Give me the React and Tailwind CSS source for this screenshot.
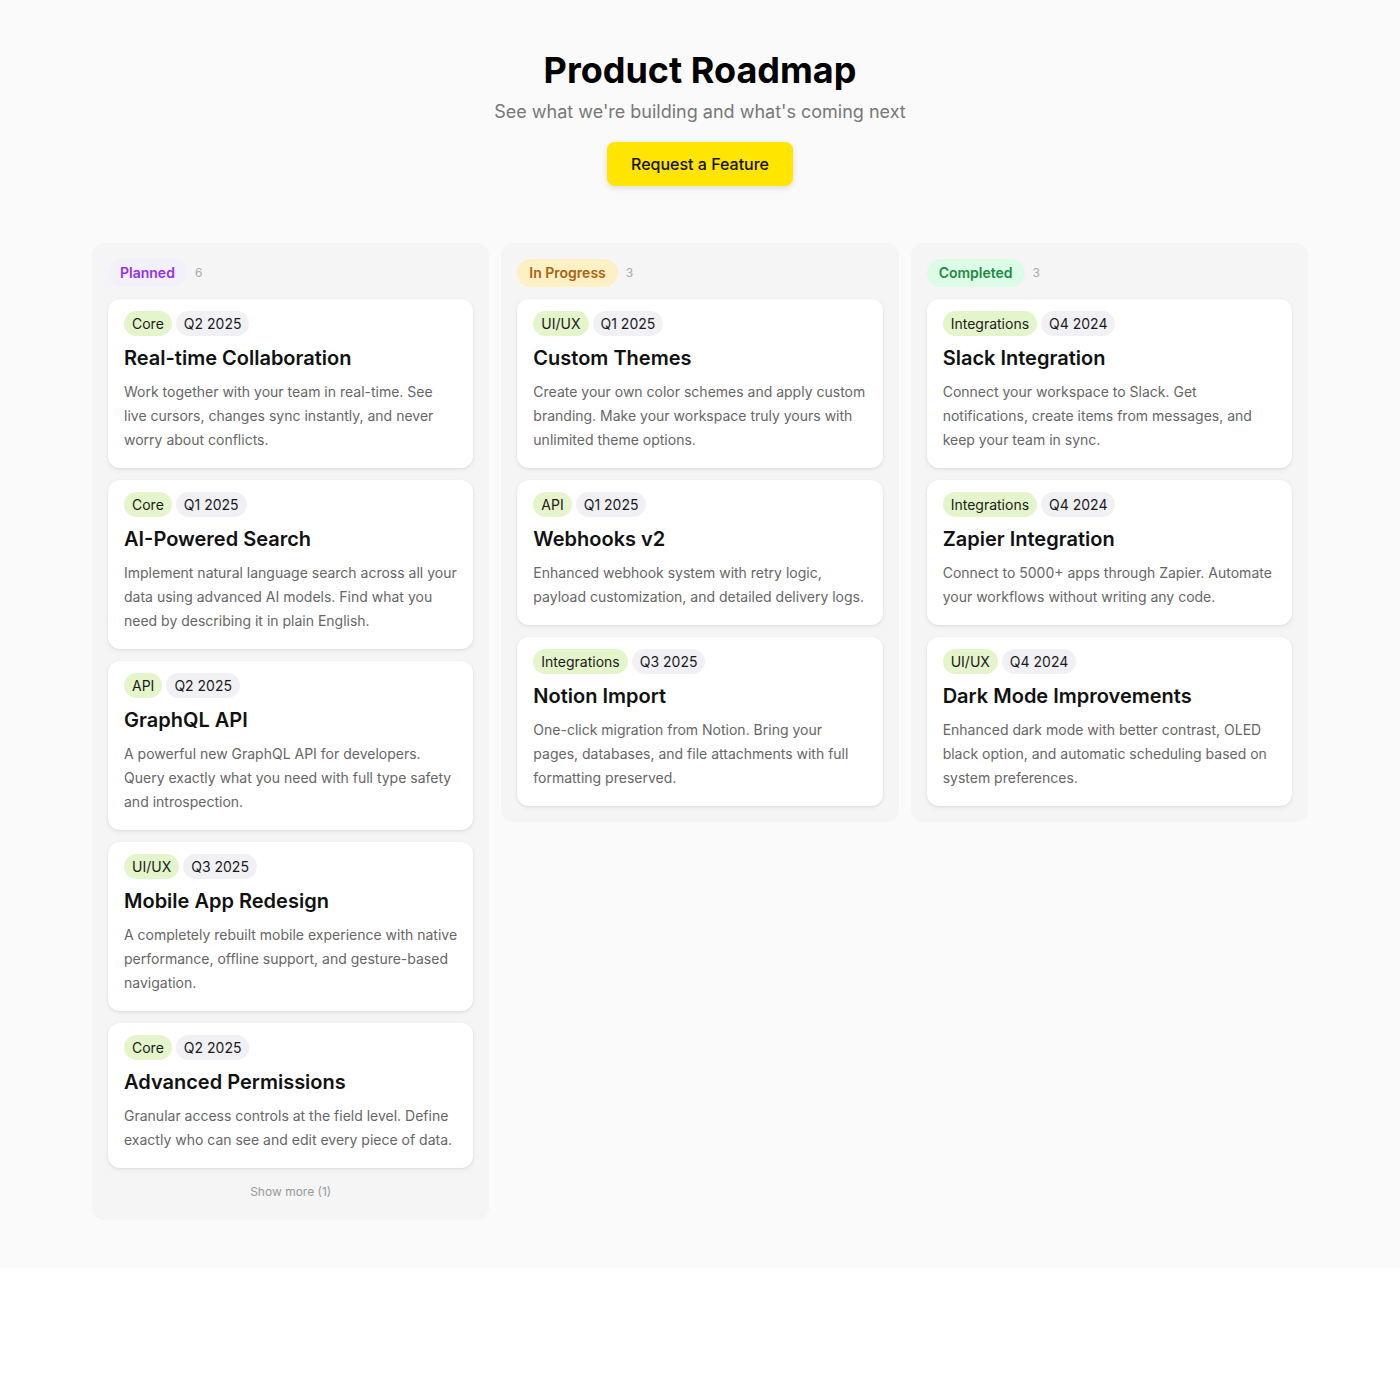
const columns = [
  {
    name: 'Planned',
    count: 6,
    pill: 'bg-[#f2f0f9] text-[#9333ea]',
    showMore: 1,
    items: [
      {
        tag: 'Core',
        quarter: 'Q2 2025',
        title: 'Real-time Collaboration',
        body: 'Work together with your team in real-time. See live cursors, changes sync instantly, and never worry about conflicts.',
      },
      {
        tag: 'Core',
        quarter: 'Q1 2025',
        title: 'AI-Powered Search',
        body: 'Implement natural language search across all your data using advanced AI models. Find what you need by describing it in plain English.',
      },
      {
        tag: 'API',
        quarter: 'Q2 2025',
        title: 'GraphQL API',
        body: 'A powerful new GraphQL API for developers. Query exactly what you need with full type safety and introspection.',
      },
      {
        tag: 'UI/UX',
        quarter: 'Q3 2025',
        title: 'Mobile App Redesign',
        body: 'A completely rebuilt mobile experience with native performance, offline support, and gesture-based navigation.',
      },
      {
        tag: 'Core',
        quarter: 'Q2 2025',
        title: 'Advanced Permissions',
        body: 'Granular access controls at the field level. Define exactly who can see and edit every piece of data.',
      },
    ],
  },
  {
    name: 'In Progress',
    count: 3,
    pill: 'bg-[#fdf0c4] text-[#a9630f]',
    items: [
      {
        tag: 'UI/UX',
        quarter: 'Q1 2025',
        title: 'Custom Themes',
        body: 'Create your own color schemes and apply custom branding. Make your workspace truly yours with unlimited theme options.',
      },
      {
        tag: 'API',
        quarter: 'Q1 2025',
        title: 'Webhooks v2',
        body: 'Enhanced webhook system with retry logic, payload customization, and detailed delivery logs.',
      },
      {
        tag: 'Integrations',
        quarter: 'Q3 2025',
        title: 'Notion Import',
        body: 'One-click migration from Notion. Bring your pages, databases, and file attachments with full formatting preserved.',
      },
    ],
  },
  {
    name: 'Completed',
    count: 3,
    pill: 'bg-[#dcfce7] text-[#218a45]',
    items: [
      {
        tag: 'Integrations',
        quarter: 'Q4 2024',
        title: 'Slack Integration',
        body: 'Connect your workspace to Slack. Get notifications, create items from messages, and keep your team in sync.',
      },
      {
        tag: 'Integrations',
        quarter: 'Q4 2024',
        title: 'Zapier Integration',
        body: 'Connect to 5000+ apps through Zapier. Automate your workflows without writing any code.',
      },
      {
        tag: 'UI/UX',
        quarter: 'Q4 2024',
        title: 'Dark Mode Improvements',
        body: 'Enhanced dark mode with better contrast, OLED black option, and automatic scheduling based on system preferences.',
      },
    ],
  },
]

function Card({ item }) {
  return (
    <div className="rounded-xl bg-white px-4 pt-3 pb-4 shadow-[0_1px_3px_rgba(0,0,0,0.08),0_2px_6px_rgba(0,0,0,0.04)]">
      <div className="flex items-center gap-1">
        <span className="rounded-full bg-[#e5f5cb] px-2 py-0.5 text-sm leading-[21px] text-[#1a1a1a]">
          {item.tag}
        </span>
        <span className="rounded-full bg-[#f1f1f5] px-2 py-0.5 text-sm leading-[21px] text-[#1a1a1a]">
          {item.quarter}
        </span>
      </div>
      <h3 className="mt-2 text-xl leading-7 font-semibold text-[#111]">{item.title}</h3>
      <p className="mt-2 text-sm leading-6 text-[#666]">{item.body}</p>
    </div>
  )
}

function Column({ column }) {
  return (
    <div className="rounded-xl bg-[#f5f5f5] p-4">
      <div className="mb-3 flex items-center gap-2">
        <span className={`rounded-full px-3 py-1 text-sm leading-5 font-semibold ${column.pill}`}>
          {column.name}
        </span>
        <span className="text-xs text-[#aaa]">{column.count}</span>
      </div>
      <div className="flex flex-col gap-3">
        {column.items.map((item) => (
          <Card key={item.title} item={item} />
        ))}
      </div>
      {column.showMore ? (
        <button
          type="button"
          className="mt-3 w-full py-1 text-center text-xs leading-4 text-[#999]"
        >
          {`Show more (${column.showMore})`}
        </button>
      ) : null}
    </div>
  )
}

export default function App() {
  return (
    <div className="bg-white font-['Inter','Noto_Sans',sans-serif]">
      <div className="bg-[#fafafa] pt-[50px] pb-12">
        <div className="flex flex-col items-center">
          <h1 className="text-4xl leading-10 font-bold text-black">Product Roadmap</h1>
          <p className="mt-2 text-lg leading-7 text-[#777]">See what we're building and what's coming next</p>
          <button
            type="button"
            className="mt-4 h-11 rounded-lg bg-[#ffe500] px-6 text-base font-medium text-[#111] shadow-[0_2px_6px_rgba(0,0,0,0.12)]"
          >
            Request a Feature
          </button>
        </div>
        <div className="mx-auto mt-[57px] grid w-[1216px] grid-cols-3 items-start gap-3">
          {columns.map((column) => (
            <Column key={column.name} column={column} />
          ))}
        </div>
      </div>
      <div className="h-[132px]" />
    </div>
  )
}
